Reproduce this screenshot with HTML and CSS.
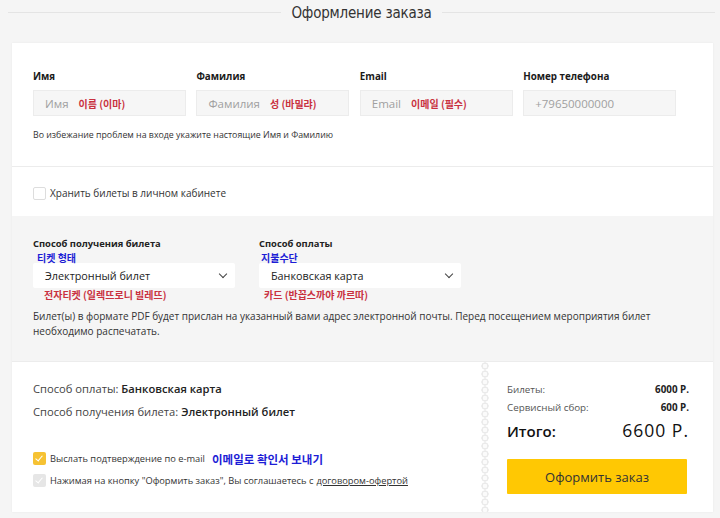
FILE: index.html
```html
<html lang="ru">

<head>
    <meta charset="UTF-8">
    <meta name="viewport" content="width=device-width, initial-scale=1.0">
    <title>Оформление заказа</title>
    <link rel="stylesheet" href="styles.css">
</head>

<body>
    <div class="page-title">
        <span class="line"></span>
        <h1>Оформление заказа</h1>
        <span class="line"></span>
    </div>

    <div class="card">
        <div class="section contacts">
            <div class="fields">
                <div class="field">
                    <label>Имя</label>
                    <div class="input"><span class="ph">Имя</span><span class="ko red">이름 (이마)</span></div>
                </div>
                <div class="field">
                    <label>Фамилия</label>
                    <div class="input"><span class="ph">Фамилия</span><span class="ko red">성 (바밀랴)</span></div>
                </div>
                <div class="field">
                    <label>Email</label>
                    <div class="input"><span class="ph">Email</span><span class="ko red">이메일 (필수)</span></div>
                </div>
                <div class="field">
                    <label>Номер телефона</label>
                    <div class="input"><span class="ph">+79650000000</span></div>
                </div>
            </div>
            <p class="hint">Во избежание проблем на входе укажите настоящие Имя и Фамилию</p>
        </div>

        <div class="section store">
            <label class="check">
                <span class="box"></span>
                Хранить билеты в личном кабинете
            </label>
        </div>

        <div class="section delivery">
            <div class="selects">
                <div class="select-field">
                    <div class="sel-label">Способ получения билета</div>
                    <div class="ko blue">티켓 형태</div>
                    <div class="select">Электронный билет<span class="chev"></span></div>
                    <div class="ko red under">전자티켓 (일렉뜨로니 빌레뜨)</div>
                </div>
                <div class="select-field">
                    <div class="sel-label">Способ оплаты</div>
                    <div class="ko blue">지불수단</div>
                    <div class="select">Банковская карта<span class="chev"></span></div>
                    <div class="ko red under">카드 (반꼽스까야 까르따)</div>
                </div>
            </div>
            <p class="note">Билет(ы) в формате PDF будет прислан на указанный вами адрес электронной почты. Перед посещением мероприятия билет<br>необходимо распечатать.</p>
        </div>

        <div class="section summary">
            <div class="summary-left">
                <div class="info">Способ оплаты: <b>Банковская карта</b></div>
                <div class="info">Способ получения билета: <b>Электронный билет</b></div>

                <div class="agree">
                    <label class="check small">
                        <span class="box on"></span>
                        Выслать подтверждение по e-mail <span class="ko blue inline">이메일로 확인서 보내기</span>
                    </label>
                    <label class="check small">
                        <span class="box off"></span>
                        Нажимая на кнопку "Оформить заказ", Вы соглашаетесь с <a href="#">договором-офертой</a>
                    </label>
                </div>
            </div>
            <div class="perforation"></div>
            <div class="summary-right">
                <div class="row"><span>Билеты:</span><b>6000 Р.</b></div>
                <div class="row"><span>Сервисный сбор:</span><b>600 Р.</b></div>
                <div class="row total"><span>Итого:</span><span class="sum">6600 Р.</span></div>
                <button class="order-btn">Оформить заказ</button>
            </div>
        </div>
    </div>
</body>
</html>
```

FILE: styles.css
```css
* {
    box-sizing: border-box;
}

body {
    margin: 0;
    background-color: #f5f5f5;
    font-family: 'Open Sans', 'Noto Sans CJK KR', sans-serif;
    color: #222;
}

.page-title {
    display: flex;
    align-items: center;
    height: 25px;
    padding: 0 5px 0 8px;
    margin-bottom: 18px;
}

.page-title .line {
    flex: 1;
    height: 1px;
    background-color: #e4e4e4;
}

.page-title h1 {
    margin: 0 10px;
    font-family: 'Liberation Sans Narrow', 'DejaVu Sans Condensed', Roboto, sans-serif;
    font-weight: normal;
    font-size: 15px;
    color: #333;
    letter-spacing: -0.2px;
}

.card {
    margin: 0 7px 0 12px;
    background-color: #fff;
    box-shadow: 0 0 2px rgba(0, 0, 0, 0.06);
}

.section {
    padding: 0 21px;
}

/* contacts */
.contacts {
    padding-top: 27px;
    padding-bottom: 24px;
    border-bottom: 1px solid #ececec;
}

.fields {
    display: grid;
    grid-template-columns: repeat(4, 153px);
    column-gap: 10.4px;
}

.field label {
    display: block;
    font-size: 9.8px;
    font-weight: bold;
    line-height: 14px;
    margin-bottom: 6px;
    color: #1a1a1a;
}

.input {
    height: 26px;
    background-color: #f6f6f6;
    border: 1px solid #ececec;
    display: flex;
    align-items: center;
    padding: 0 11px;
    white-space: nowrap;
}

.input .ph {
    font-size: 11.5px;
    color: #a0a0a0;
}

.ko {
    font-family: 'Noto Sans CJK KR', sans-serif;
    font-size: 10px;
    font-weight: bold;
}

.ko.red {
    color: #c9313f;
}

.ko.blue {
    color: #1d1dd6;
}

.input .ko {
    margin-left: 10px;
}

.hint {
    margin: 13px 0 0;
    font-size: 8.8px;
    line-height: 13px;
    color: #333;
}

/* checkbox */
.check {
    display: flex;
    align-items: center;
    color: #333;
}

.box {
    width: 13px;
    height: 13px;
    border: 1px solid #ddd;
    border-radius: 2px;
    background-color: #fff;
    margin-right: 4px;
    position: relative;
    flex-shrink: 0;
}

.box.on,
.box.off {
    border: none;
}

.box.on {
    background-color: #f6c233;
}

.box.off {
    background-color: #e6e6e6;
}

.box.on::after,
.box.off::after {
    content: "";
    position: absolute;
    left: 4px;
    top: 2px;
    width: 3px;
    height: 6px;
    border: solid #fff;
    border-width: 0 1.5px 1.5px 0;
    transform: rotate(40deg);
}

.store {
    padding-top: 18px;
    padding-bottom: 15px;
}

.store .check {
    font-size: 10px;
    height: 16px;
}

/* delivery */
.delivery {
    background-color: #f5f5f5;
    padding-top: 21px;
    padding-bottom: 22px;
}

.selects {
    display: flex;
    gap: 24px;
}

.sel-label {
    font-size: 9.4px;
    font-weight: bold;
    line-height: 14px;
}

.select-field .ko.blue {
    line-height: 13px;
    margin-left: 4px;
}

.select-field:last-child .ko.blue {
    margin-left: 2px;
}

.select {
    width: 202px;
    height: 25px;
    margin-top: -1px;
    background-color: #fff;
    border-radius: 2px;
    display: flex;
    align-items: center;
    justify-content: space-between;
    padding: 0 9px 0 12px;
    font-size: 10.8px;
    color: #222;
}

.chev {
    width: 6px;
    height: 6px;
    border: solid #444;
    border-width: 0 1.3px 1.3px 0;
    transform: rotate(45deg);
    margin-top: -4px;
}

.under {
    margin: 0 0 0 11px;
    line-height: 14px;
}

.select-field:last-child .under {
    margin-left: 5px;
}

.note {
    margin: 7px 0 0;
    font-size: 10px;
    line-height: 15px;
    color: #333;
}

/* summary */
.summary {
    display: flex;
    padding-right: 0;
    border-top: 1px solid #ececec;
}

.summary-left {
    flex: 1;
    padding-top: 20px;
}

.info {
    font-size: 11.2px;
    line-height: 14px;
    color: #444;
    margin-bottom: 9px;
}

.info b {
    color: #222;
    font-weight: 600;
}

.agree {
    margin-top: 33px;
}

.agree .check {
    font-size: 9.3px;
    margin-bottom: 9px;
    height: 13px;
}

.agree .ko.inline {
    margin-left: 7px;
    font-size: 11.5px;
}

.agree a {
    color: #333;
    margin-left: 3px;
}

.perforation {
    width: 8px;
    background-image: radial-gradient(circle, #fbfbfb 2px, #eaeaea 2.5px, #eaeaea 3.4px, transparent 3.9px);
    background-size: 8px 8px;
    background-repeat: repeat-y;
}

.summary-right {
    width: 224px;
    padding: 21px 24px 18px 18px;
}

.row {
    display: flex;
    justify-content: space-between;
    align-items: baseline;
    font-size: 9.8px;
    line-height: 13px;
    color: #555;
    margin-bottom: 5px;
}

.row b {
    color: #222;
    font-weight: bold;
}

.row.total {
    margin-top: 6px;
    font-size: 15px;
    line-height: 20px;
    color: #111;
    font-weight: 600;
}

.row.total .sum {
    font-size: 17.5px;
    font-weight: 500;
    letter-spacing: 1px;
}

.order-btn {
    width: 180px;
    height: 35px;
    margin-top: 13px;
    border: none;
    border-radius: 1px;
    background-color: #ffc803;
    font-family: 'Open Sans', sans-serif;
    font-size: 13px;
    color: #333;
    cursor: pointer;
}
```
